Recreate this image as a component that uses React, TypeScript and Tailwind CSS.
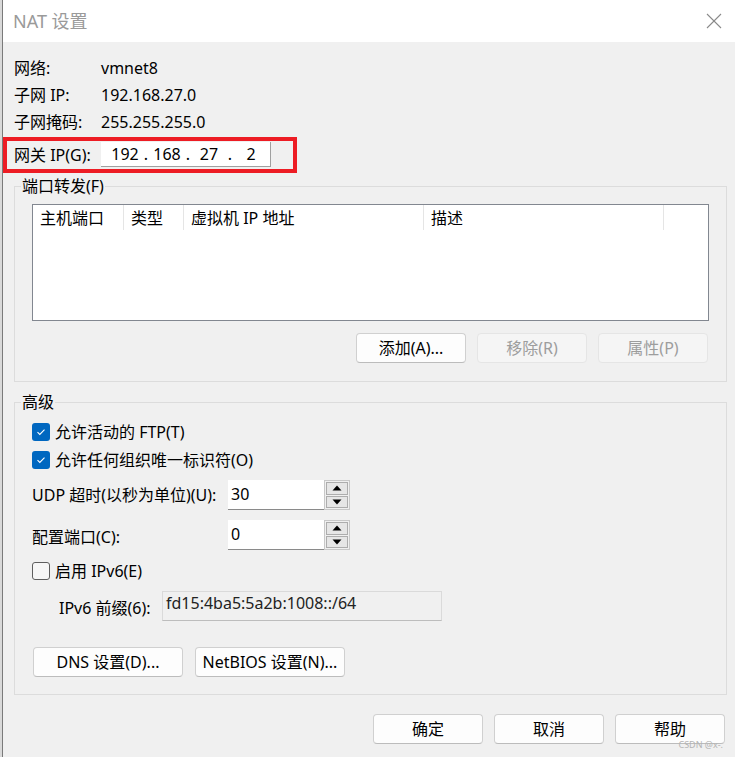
import type React from "react";

const font = "font-['Noto_Sans','Noto_Sans_CJK_SC',sans-serif]";

function WinButton({
  children,
  width = "w-[110px]",
  disabled = false,
}: {
  children: React.ReactNode;
  width?: string;
  disabled?: boolean;
}) {
  return (
    <div
      className={
        disabled
          ? `${width} h-[30px] flex items-center justify-center rounded-[4px] border border-[#e5e5e5] bg-[#f5f5f5] text-[#9d9d9d]`
          : `${width} h-[30px] flex items-center justify-center rounded-[4px] border border-[#d0d0d0] border-b-[#bcbcbc] bg-[#fdfdfd] text-black`
      }
    >
      {children}
    </div>
  );
}

function CheckBox({ checked, label }: { checked: boolean; label: string }) {
  return (
    <div className="h-[28px] flex items-center">
      {checked ? (
        <div className="w-[18px] h-[18px] rounded-[3px] bg-[#0067c0] flex items-center justify-center">
          <svg width="18" height="18" viewBox="0 0 18 18">
            <polyline
              points="5.5,9.2 7.8,11.4 12.5,6.6"
              fill="none"
              stroke="#ffffff"
              strokeWidth="1.1"
            />
          </svg>
        </div>
      ) : (
        <div className="w-[18px] h-[18px] rounded-[3px] border border-[#5f5f5f] bg-[#f7f7f7]" />
      )}
      <span className="ml-[5px]">{label}</span>
    </div>
  );
}

function SpinBox({ value }: { value: string }) {
  return (
    <div className="flex h-[30px]">
      <div className="w-[96px] h-full bg-white border-b border-[#8a8a8a] pl-[3px] flex items-center pb-[2px]">
        {value}
      </div>
      <div className="w-[26px] h-full flex flex-col border border-[#c8c8c8] bg-[#f0f0f0] p-[1px] gap-[1px]">
        <div className="flex-1 border border-[#adadad] bg-[#e6e6e6] flex items-center justify-center">
          <svg width="10" height="6" viewBox="0 0 10 6">
            <polygon points="5,0.5 9.5,5.5 0.5,5.5" fill="#000" />
          </svg>
        </div>
        <div className="flex-1 border border-[#adadad] bg-[#e6e6e6] flex items-center justify-center">
          <svg width="10" height="6" viewBox="0 0 10 6">
            <polygon points="0.5,0.5 9.5,0.5 5,5.5" fill="#000" />
          </svg>
        </div>
      </div>
    </div>
  );
}

function GroupBox({
  title,
  className,
  children,
}: {
  title: string;
  className: string;
  children: React.ReactNode;
}) {
  return (
    <fieldset className={`ml-[11px] w-[713px] border border-[#dcdcdc] ${className}`}>
      <legend className="ml-[6px] px-[1px] leading-[20px]">{title}</legend>
      {children}
    </fieldset>
  );
}

export default function App() {
  const info = [
    ["网络:", "vmnet8"],
    ["子网 IP:", "192.168.27.0"],
    ["子网掩码:", "255.255.255.0"],
  ];
  const ipParts = ["192", "168", "27", "2"];
  const columns = [
    { name: "主机端口", w: "w-[91px]" },
    { name: "类型", w: "w-[60px]" },
    { name: "虚拟机 IP 地址", w: "w-[240px]" },
    { name: "描述", w: "w-[240px]" },
  ];

  return (
    <div className={`w-[735px] h-[757px] flex overflow-hidden text-[16px] text-black ${font}`}>
      <div className="w-[3px] h-full bg-[#d9d9d9] border-r border-[#7a7a7a]" />
      <div className="flex-1 flex flex-col bg-[#f0f0f0] relative">
        {/* title bar */}
        <div className="h-[42px] bg-white flex items-center justify-between pl-[10px] pr-[13px]">
          <span className="text-[18px] text-[#9a9a9a]">NAT 设置</span>
          <svg width="16" height="16" viewBox="0 0 16 16">
            <line x1="1" y1="1" x2="15" y2="15" stroke="#8a8a8a" strokeWidth="1.1" />
            <line x1="15" y1="1" x2="1" y2="15" stroke="#8a8a8a" strokeWidth="1.1" />
          </svg>
        </div>

        {/* network info */}
        <div className="pt-[12px] flex flex-col">
          {info.map(([label, value]) => (
            <div key={label} className="h-[27px] flex items-center pl-[11px]">
              <span className="w-[87px]">{label}</span>
              <span>{value}</span>
            </div>
          ))}
        </div>

        {/* gateway row */}
        <div className="mt-[2px] w-[294px] h-[36px] border-4 border-[#ed1c24] flex items-start pl-[7px]">
          <span className="w-[87px] h-[28px] flex items-center">网关 IP(G):</span>
          <div className="mt-[1px] w-[170px] h-[25px] bg-white border-r border-b border-[#a0a0a0] flex items-center pl-[7px]">
            {ipParts.map((p, i) => (
              <div key={i} className="flex">
                <span className="w-[34px] text-center">{p}</span>
                {i < ipParts.length - 1 && <span className="w-[8px] text-center">.</span>}
              </div>
            ))}
          </div>
        </div>

        {/* port forwarding */}
        <GroupBox title="端口转发(F)" className="mt-[3px]">
          <div className="px-[17px] pt-[8px] pb-[18px] flex flex-col">
            <div className="h-[117px] bg-white border border-[#828790] flex flex-col">
              <div className="h-[25px] flex">
                {columns.map((c) => (
                  <div
                    key={c.name}
                    className={`${c.w} h-full border-r border-[#e5e5e5] pl-[7px] flex items-center`}
                  >
                    {c.name}
                  </div>
                ))}
              </div>
            </div>
            <div className="mt-[12px] flex justify-end gap-[11px] pr-[1px]">
              <WinButton>添加(A)...</WinButton>
              <WinButton disabled>移除(R)</WinButton>
              <WinButton disabled>属性(P)</WinButton>
            </div>
          </div>
        </GroupBox>

        {/* advanced */}
        <GroupBox title="高级" className="mt-[10px]">
          <div className="px-[17px] pt-[6px] pb-[17px] flex flex-col">
            <CheckBox checked label="允许活动的 FTP(T)" />
            <CheckBox checked label="允许任何组织唯一标识符(O)" />
            <div className="mt-[6px] flex items-center">
              <span className="w-[196px]">UDP 超时(以秒为单位)(U):</span>
              <SpinBox value="30" />
            </div>
            <div className="mt-[10px] flex items-center">
              <span className="w-[196px] pt-[3px]">配置端口(C):</span>
              <SpinBox value="0" />
            </div>
            <div className="mt-[7px]">
              <CheckBox checked={false} label="启用 IPv6(E)" />
            </div>
            <div className="mt-[6px] flex items-center">
              <span className="w-[130px] pl-[27px] pt-[3px]">IPv6 前缀(6):</span>
              <div className="w-[280px] h-[30px] bg-[#f0f0f0] border border-[#dadada] border-b-[#bdbdbd] pl-[3px] pb-[6px] flex items-center text-[#222]">
                fd15:4ba5:5a2b:1008::/64
              </div>
            </div>
            <div className="mt-[26px] ml-[1px] flex gap-[12px]">
              <WinButton width="w-[150px]">DNS 设置(D)...</WinButton>
              <WinButton width="w-[150px]">NetBIOS 设置(N)...</WinButton>
            </div>
          </div>
        </GroupBox>

        {/* dialog buttons */}
        <div className="mt-[19px] flex justify-end gap-[11px] pr-[10px]">
          <WinButton>确定</WinButton>
          <WinButton>取消</WinButton>
          <WinButton>帮助</WinButton>
        </div>

        <span className="absolute right-[12px] bottom-[7px] text-[9px] leading-[10px] text-[#b4b4b4]">
          CSDN @x-.
        </span>
      </div>
    </div>
  );
}
